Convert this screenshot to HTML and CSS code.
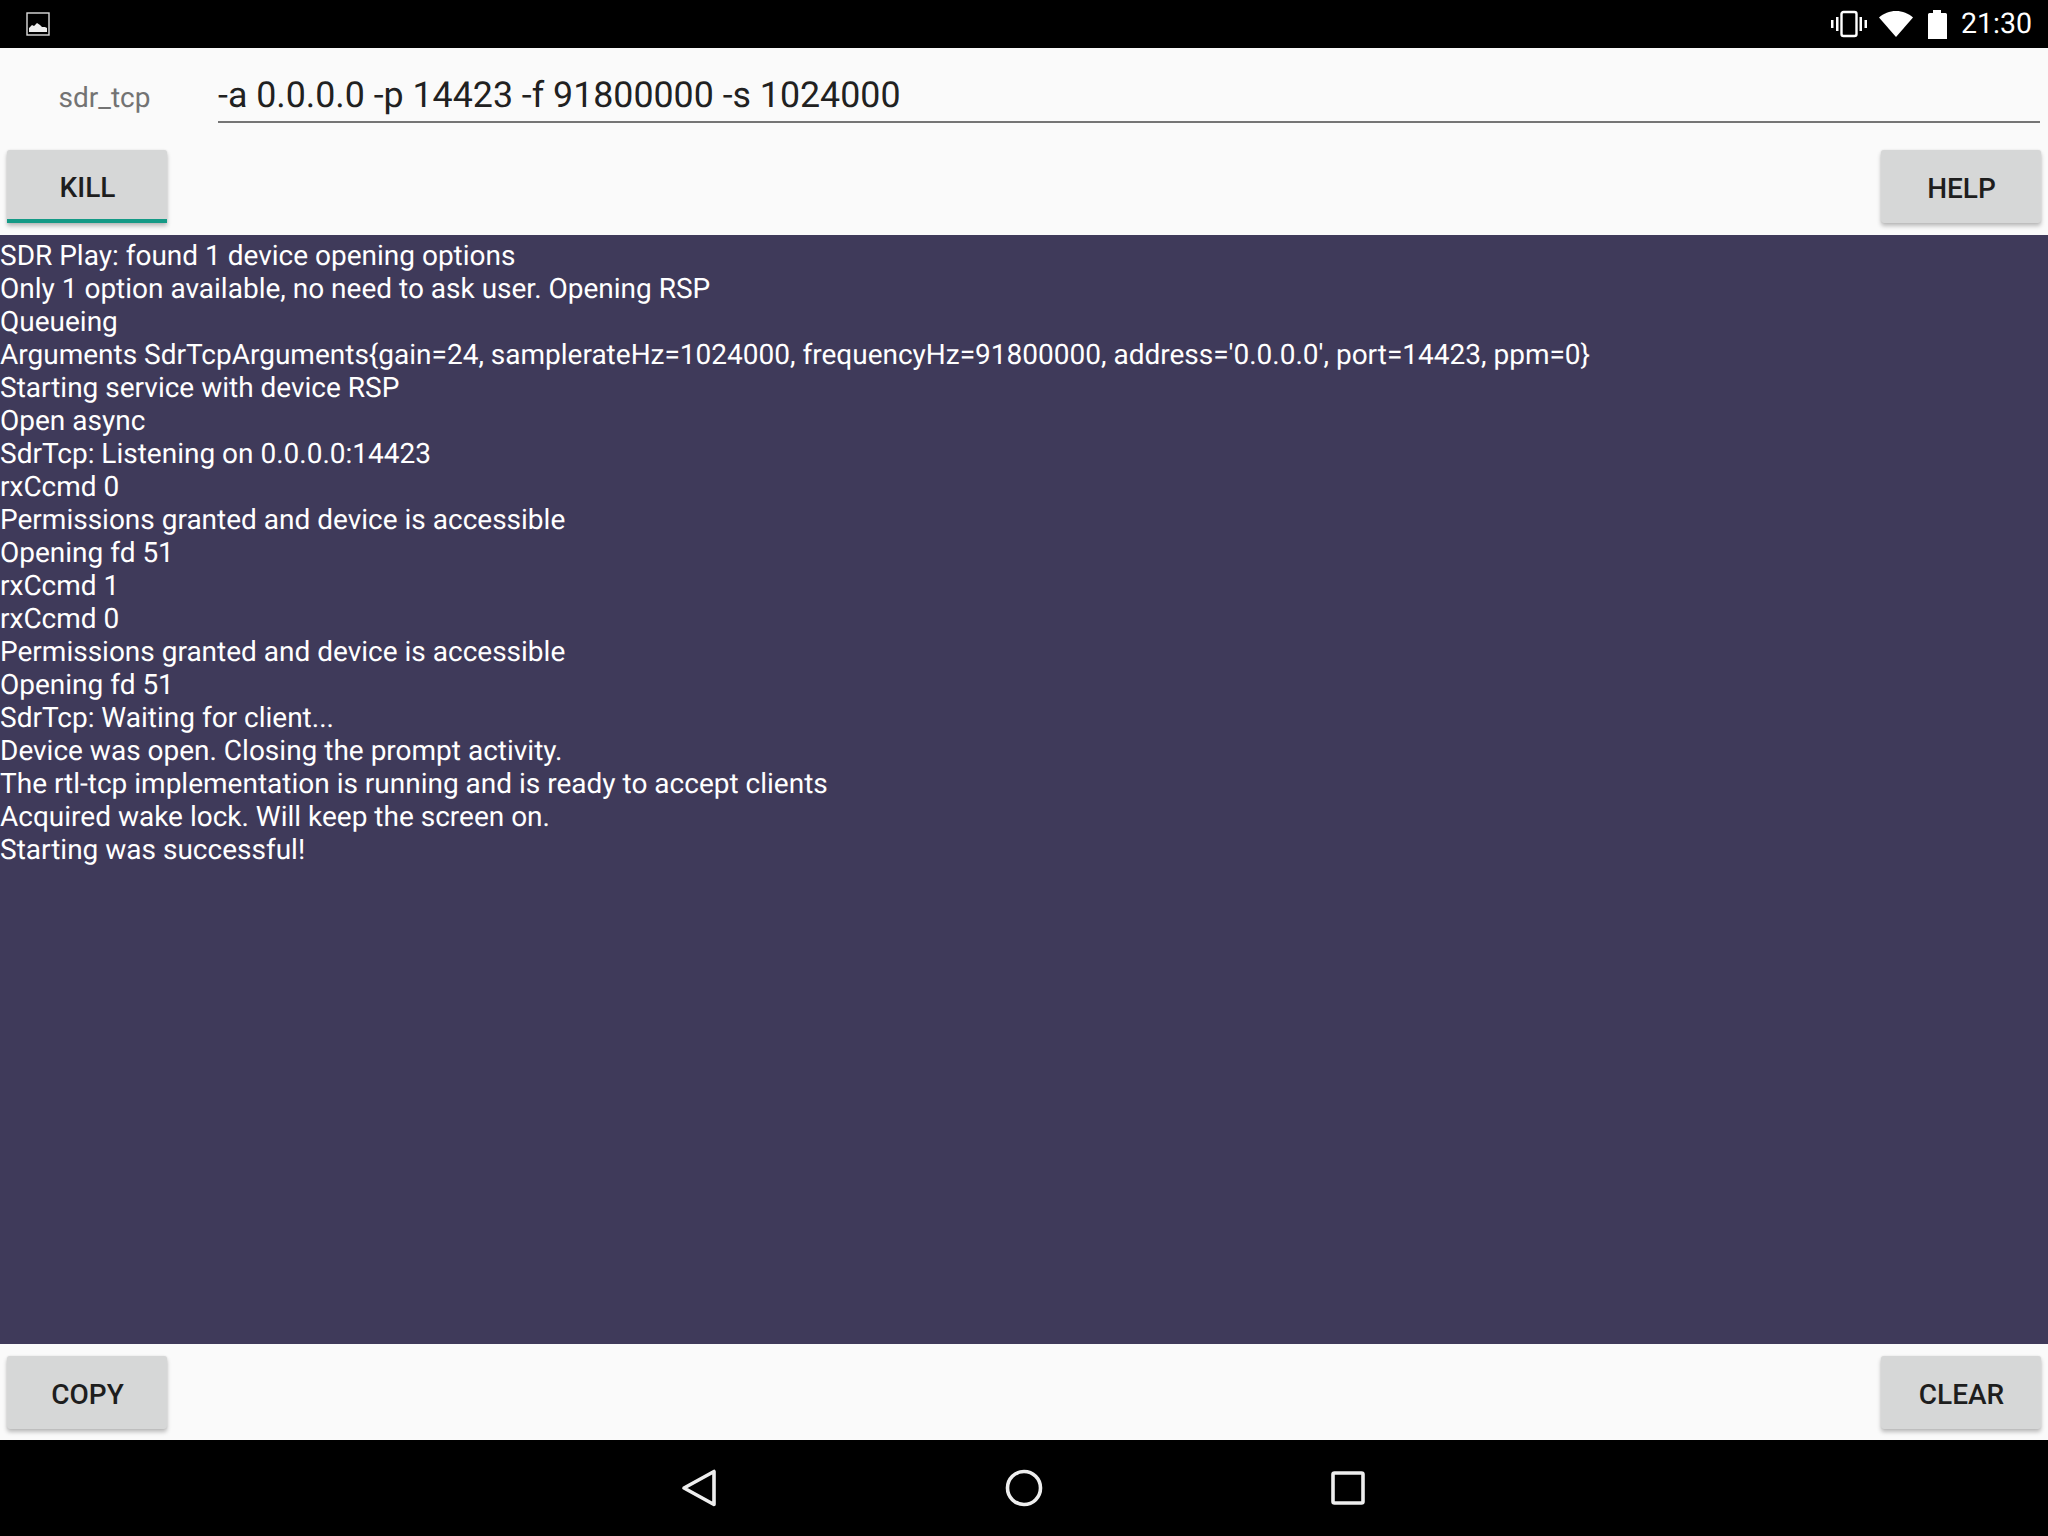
FILE: index.html
```html
<!DOCTYPE html>
<html lang="en">
<head>
<meta charset="utf-8">
<title>sdr_tcp</title>
<link rel="stylesheet" href="styles.css">
</head>
<body>
<div class="app">
  <header class="status">
    <svg class="notif" width="24" height="24" viewBox="0 0 24 24"><rect x="1" y="1" width="22" height="22" fill="none" stroke="#ddd" stroke-width="1.4"/><path d="M3 20v-4l3-3 2 1 3-3 3 2 2 2 3 0 2 1v4z" fill="#eee"/></svg>
    <div class="status-right">
      <svg class="vib" width="38" height="30" viewBox="0 0 38 30"><path d="M1 11h2.500v8H1zM6 8h2.500v14H6zM29.500 8H32v14h-2.500zM34.500 11H37v8h-2.500z" fill="#fff"/><rect x="11.500" y="3" width="15" height="24" rx="2" fill="none" stroke="#fff" stroke-width="2.400"/></svg>
      <svg class="wifi" width="36" height="28" viewBox="0 0 36 28"><path d="M18 27 1 7.500C5.500 3.500 11.500 1 18 1s12.500 2.500 17 6.500z" fill="#fff"/></svg>
      <svg class="batt" width="20" height="29" viewBox="0 0 20 29"><path d="M6 0h8v3h4.500A1.500 1.500 0 0 1 20 4.500V29H1V4.500A1.500 1.500 0 0 1 2.500 3H6z" fill="#fff"/></svg>
      <span class="clock">21:30</span>
    </div>
  </header>

  <main class="screen">
    <div class="cmd-row">
      <span class="cmd-label">sdr_tcp</span>
      <div class="cmd-input">-a 0.0.0.0 -p 14423 -f 91800000 -s 1024000</div>
    </div>
    <div class="btn-row top">
      <button class="btn on">KILL</button>
      <button class="btn">HELP</button>
    </div>
    <div class="log">
      <div>SDR Play: found 1 device opening options</div>
      <div>Only 1 option available, no need to ask user. Opening RSP</div>
      <div>Queueing</div>
      <div>Arguments SdrTcpArguments{gain=24, samplerateHz=1024000, frequencyHz=91800000, address='0.0.0.0', port=14423, ppm=0}</div>
      <div>Starting service with device RSP</div>
      <div>Open async</div>
      <div>SdrTcp: Listening on 0.0.0.0:14423</div>
      <div>rxCcmd 0</div>
      <div>Permissions granted and device is accessible</div>
      <div>Opening fd 51</div>
      <div>rxCcmd 1</div>
      <div>rxCcmd 0</div>
      <div>Permissions granted and device is accessible</div>
      <div>Opening fd 51</div>
      <div>SdrTcp: Waiting for client...</div>
      <div>Device was open. Closing the prompt activity.</div>
      <div>The rtl-tcp implementation is running and is ready to accept clients</div>
      <div>Acquired wake lock. Will keep the screen on.</div>
      <div>Starting was successful!</div>
    </div>
    <div class="btn-row bottom">
      <button class="btn">COPY</button>
      <button class="btn">CLEAR</button>
    </div>
  </main>

  <nav class="navbar">
    <svg width="36" height="38" viewBox="0 0 36 38"><path d="M33 2.500V35.500L3 19z" fill="none" stroke="#eee" stroke-width="3.600" stroke-linejoin="round"/></svg>
    <svg width="38" height="38" viewBox="0 0 38 38"><circle cx="19" cy="19" r="16.500" fill="none" stroke="#eee" stroke-width="3.600"/></svg>
    <svg width="34" height="34" viewBox="0 0 34 34"><rect x="2" y="2" width="30" height="30" rx="1.500" fill="none" stroke="#eee" stroke-width="3.600"/></svg>
  </nav>
</div>
</body>
</html>
```
FILE: styles.css
```css
* { box-sizing: border-box; }
html, body { margin: 0; padding: 0; }
body { background: #000; font-family: Roboto, "Liberation Sans", sans-serif; text-rendering: geometricPrecision; }
.app { width: 2048px; height: 1536px; display: flex; flex-direction: column; }

.status { height: 48px; background: #000; display: flex; align-items: center; justify-content: space-between; padding: 0 16px 0 26px; flex: none; }
.status-right { display: flex; align-items: center; }
.vib { margin-right: 10px; }
.wifi { margin-right: 13px; }
.batt { margin-right: 14px; }
.clock { color: #fff; font-size: 28.5px; line-height: 48px; }

.screen { flex: 1; background: #fafafa; display: flex; flex-direction: column; min-height: 0; }

.cmd-row { height: 87px; display: flex; align-items: flex-start; padding: 0 8px 0 0; flex: none; }
.cmd-label { width: 218px; padding: 0 9px 0 0; text-align: center; color: #737373; font-size: 28px; line-height: 33px; margin-top: 33px; }
.cmd-input { flex: 1; height: 75px; border-bottom: 2px solid #757575; color: #212121; font-size: 35.75px; line-height: 42px; padding-top: 26px; white-space: nowrap; }

.btn-row { display: flex; justify-content: space-between; flex: none; padding: 0 7px 0 7px; }
.btn-row.top { height: 100px; padding-top: 15px; }
.btn-row.bottom { height: 96px; padding-top: 12px; }

.btn { width: 160px; height: 73px; border: 0; border-radius: 3px; background: #d6d7d7; color: #1e1e1e; font-family: inherit; font-size: 28px; font-weight: 500; padding: 3px 0 0 1px; box-shadow: 0 3px 4px rgba(0,0,0,.25), 0 0 2px rgba(0,0,0,.1); }
.btn.on { border-bottom: 4px solid #159a86; border-radius: 3px 3px 0 0; padding-top: 5px; }

.log { flex: 1; min-height: 0; background: #3f3a5a; color: #fff; font-size: 28px; line-height: 33px; padding-top: 4px; white-space: nowrap; }

.navbar { height: 96px; background: #000; display: grid; grid-template-columns: 36px 38px 34px; justify-content: center; column-gap: 288px; align-items: center; flex: none; padding-right: 3px; }
```
